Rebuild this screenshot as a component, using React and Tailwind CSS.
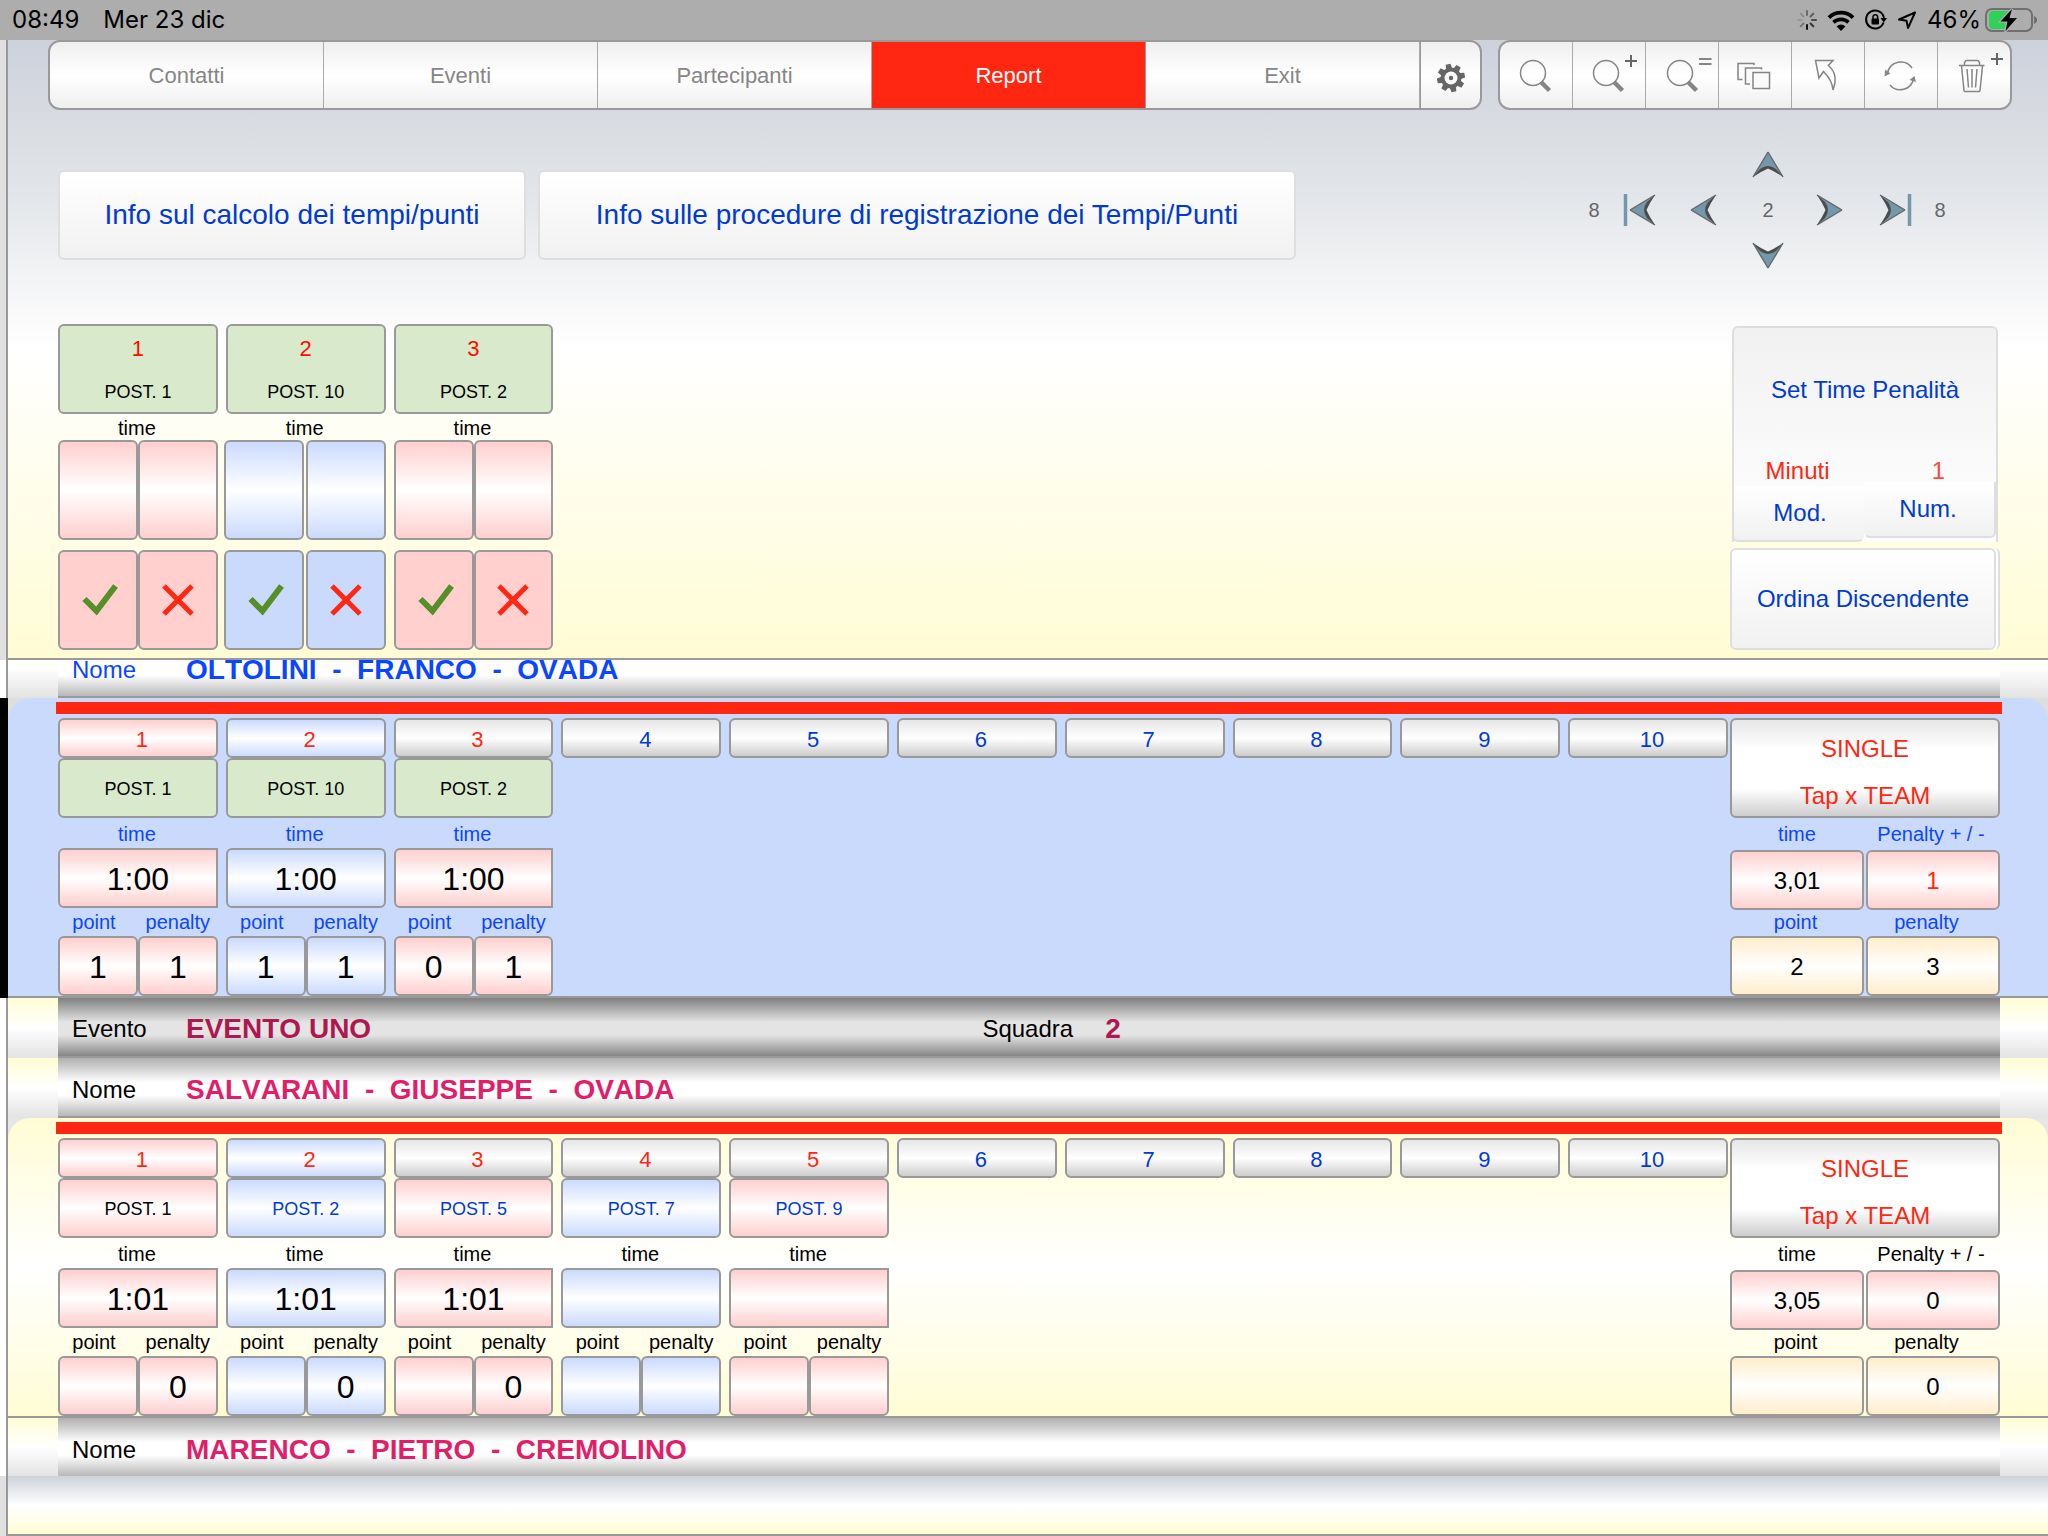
import React from "react";

const TONES = {
  pink: "bg-linear-to-b from-[#ffcfcf] via-white to-[#ffcfcf]",
  blue: "bg-linear-to-b from-[#cbdafd] via-white to-[#cbdafd]",
  gray: "bg-linear-to-b from-[#e6e6e6] via-white to-[#cdcdcd]",
  tan: "bg-linear-to-b from-[#ffedcb] via-white to-[#ffedcb]",
  green: "bg-[#d9e9cb]",
  flatPink: "bg-[#ffd0ce]",
  flatBlue: "bg-[#cadafd]",
};

const BOX = "border-2 border-[#999] min-w-0";

/* ---------- status bar ---------- */

function Spinner() {
  const shades = ["#6b6b6b", "#5a5a5a", "#4a4a4a", "#333", "#111", "#777", "#999", "#8c8c8c"];
  return (
    <svg width="20" height="20" viewBox="-10 -10 20 20" strokeWidth="2" strokeLinecap="round">
      {shades.map((c, i) => (
        <line key={i} x1="0" y1="-5" x2="0" y2="-9" stroke={c} transform={`rotate(${i * 45})`} />
      ))}
    </svg>
  );
}

function StatusBar() {
  return (
    <div className="flex h-10 items-center justify-between bg-[#adadad] pl-3 pr-2.5 font-[Inter,sans-serif] text-[24px] leading-none text-black">
      <div className="flex gap-6">
        <span>08:49</span>
        <span>Mer 23 dic</span>
      </div>
      <div className="flex items-center gap-2.5">
        <Spinner />
        <svg width="28" height="21" viewBox="0 0 26 20" fill="none" stroke="#000" strokeWidth="3.6">
          <path d="M1.5 7.2a16.5 16.5 0 0 1 23 0" />
          <path d="M5.8 11.8a10.5 10.5 0 0 1 14.4 0" />
          <path d="M13 20l-4.2-4.4a6 6 0 0 1 8.4 0z" fill="#000" stroke="none" />
        </svg>
        <svg width="22" height="22" viewBox="0 0 22 22" fill="none" stroke="#000" strokeWidth="2">
          <path d="M18.6 13.5A9 9 0 1 1 19 9" />
          <path d="M15.5 9h6.5l-3.2 4.5z" fill="#000" stroke="none" />
          <rect x="6.5" y="9.5" width="7.5" height="6" rx="1" fill="#000" stroke="none" />
          <path d="M8 10V8a2.3 2.3 0 0 1 4.6 0v2" strokeWidth="1.5" />
        </svg>
        <svg width="20" height="20" viewBox="0 0 20 20" fill="none" stroke="#000" strokeWidth="2" strokeLinejoin="round">
          <path d="M18 2.5L2 9.5l7.5 1.2L11 18z" />
        </svg>
        <div className="flex items-center gap-1">
          <span>46%</span>
          <svg width="53" height="26" viewBox="0 0 53 26">
            <rect x="1" y="2" width="46" height="22" rx="6" fill="none" stroke="#6f6f6f" strokeWidth="2" />
            <path d="M8 4h16v18H8a4 4 0 0 1-4-4V8a4 4 0 0 1 4-4z" fill="#30d158" />
            <path d="M49.5 9.5a4 4 0 0 1 0 7z" fill="#6f6f6f" stroke="#6f6f6f" />
            <path d="M27 2L15.5 14.500h7L20.5 24 32 11h-7.5z" fill="#000" stroke="#adadad" strokeWidth="2.5" paintOrder="stroke" />
          </svg>
        </div>
      </div>
    </div>
  );
}

/* ---------- top navigation ---------- */

const NAV = ["Contatti", "Eventi", "Partecipanti", "Report", "Exit"];
const GLOSS = "bg-linear-to-b from-[#efefef] via-white to-[#efefef]";

function Gear() {
  return (
    <svg width="30" height="30" viewBox="-15 -15 30 30">
      <g fill="#666">
        {[0, 1, 2, 3, 4, 5, 6, 7].map((i) => (
          <path key={i} d="M-3.2 -9L-2.4 -14H2.4L3.2 -9z" transform={`rotate(${i * 45 - 12})`} />
        ))}
        <circle r="10.5" />
      </g>
      <circle r="6.5" fill="#fafafa" />
      <circle r="2.2" fill="#666" />
    </svg>
  );
}

function Magnifier({ cx = 33 }) {
  return (
    <>
      <circle cx={cx} cy="31" r="12.5" strokeWidth="1.5" />
      <path d={`M${cx + 8} 40L${cx + 16.5} 48.5`} strokeWidth="4.5" />
    </>
  );
}

const TOOLS = [
  { name: "Cerca", art: <Magnifier /> },
  {
    name: "Estendi ricerca",
    art: (
      <>
        <Magnifier />
        <path d="M52 19h12M58 13v12" stroke="#666" strokeWidth="2" />
      </>
    ),
  },
  {
    name: "Restringi ricerca",
    art: (
      <>
        <Magnifier cx={34} />
        <path d="M53 17h12.5M53 22h12.5" strokeWidth="2" />
      </>
    ),
  },
  {
    name: "Duplica",
    art: (
      <g fill="#fbfbfb" strokeWidth="1.5">
        <rect x="19" y="21.5" width="16" height="16" />
        <rect x="25.5" y="25" width="17.5" height="17" stroke="#fbfbfb" strokeWidth="4" />
        <rect x="26.5" y="26" width="16" height="16" />
        <rect x="33" y="29.5" width="18" height="18" stroke="#fbfbfb" strokeWidth="4" />
        <rect x="34" y="30.5" width="16.5" height="16" />
      </g>
    ),
  },
  {
    name: "Annulla",
    art: (
      <path
        d="M23.5 18.5H41L36.3 23.5C43 29 45.5 36 41 48C40.5 41 37 35 31.5 29.5L27 36z"
        strokeWidth="1.5"
      />
    ),
  },
  {
    name: "Aggiorna",
    art: (
      <>
        <path d="M22.5 31A13.5 13.5 0 0 1 47 26" strokeWidth="1.5" />
        <path d="M25 43A13.5 13.5 0 0 0 48.5 37" strokeWidth="1.5" />
        <path d="M20 27.5L25.5 31.5L19.5 34.5zM44.5 38L49.5 34L51 40z" fill="#888" stroke="none" />
      </>
    ),
  },
  {
    name: "Elimina",
    art: (
      <g strokeWidth="1.5">
        <path d="M21 23.5h25.5M26.5 23V20.5L28 18.5H40L41.5 20.5V23" />
        <path d="M23.5 24L26 48.5Q26 49.5 27 49.5H41Q42 49.5 42 48.5L44.5 24" />
        <path d="M29 27L30.5 45.5M34 27V45.5M39 27L37.5 45.5" />
        <path d="M53 17h12M59 11v12" stroke="#666" strokeWidth="2" />
      </g>
    ),
  },
];

function TopNav() {
  return (
    <div className="flex gap-4 pl-10 pr-9">
      <nav className={`flex h-[70px] flex-1 overflow-hidden rounded-xl border-2 border-[#999] ${GLOSS}`}>
        {NAV.map((n) => (
          <button
            key={n}
            className={
              n === "Report"
                ? "flex-1 border-r border-[#999] bg-[#ff2712] text-[22px] text-white"
                : "flex-1 border-r border-[#aaa] text-[22px] text-[#868686]"
            }
          >
            {n}
          </button>
        ))}
        <button aria-label="Impostazioni" className="flex w-[60px] items-center justify-center border-l border-[#999] pt-1.5">
          <Gear />
        </button>
      </nav>
      <div className={`flex h-[70px] w-[514px] overflow-hidden rounded-xl border-2 border-[#999] ${GLOSS}`}>
        {TOOLS.map((t, i) => (
          <button
            key={t.name}
            aria-label={t.name}
            className={i < 6 ? "flex-1 border-r border-[#aaa]" : "flex-1"}
          >
            <svg className="w-full" height="66" viewBox="0 0 72 66" fill="none" stroke="#858585">
              {t.art}
            </svg>
          </button>
        ))}
      </div>
    </div>
  );
}

/* ---------- record navigation ---------- */

function Arrow({ turn, bar }) {
  return (
    <svg width="36" height="36" viewBox="-18 -18 36 36">
      <g transform={`rotate(${turn})`}>
        <g transform={bar ? "translate(0 2)" : undefined}>
          <path d="M0 -12L15 13Q7 6 0 4Q-7 6 -15 13z" fill="#7597ab" />
          <path d="M0 -12L15 13M0 -12L-15 13" stroke="#666" strokeWidth="1.4" />
          <path d="M-15 13L-8 5Q-4 2 0 2T8 5L15 13Q7 7.5 0 4.5Q-7 7.5 -15 13z" fill="#4c4c4c" />
        </g>
        {bar && <path d="M-16 -14.5H16" stroke="#7597ab" strokeWidth="3.5" />}
      </g>
    </svg>
  );
}

function RecordNav() {
  return (
    <div className="mr-[98px] mt-[31px] grid grid-cols-[32px_60px_66px_64px_60px_70px_20px] grid-rows-[46px_46px_46px] place-items-center text-[20px] text-[#666]">
      <button aria-label="Su" className="col-start-4"><Arrow turn={0} /></button>
      <span className="col-start-1 row-start-2">8</span>
      <button aria-label="Primo" className="row-start-2"><Arrow turn={-90} bar /></button>
      <button aria-label="Precedente" className="row-start-2"><Arrow turn={-90} /></button>
      <span className="row-start-2">2</span>
      <button aria-label="Successivo" className="row-start-2"><Arrow turn={90} /></button>
      <button aria-label="Ultimo" className="row-start-2"><Arrow turn={90} bar /></button>
      <span className="row-start-2">8</span>
      <button aria-label="Giù" className="col-start-4 row-start-3"><Arrow turn={180} /></button>
    </div>
  );
}

/* ---------- header panel ---------- */

function InfoButton({ wide, children }) {
  return (
    <button
      className={`${wide ? "w-[758px]" : "w-[468px]"} h-[90px] rounded-md border-2 border-[#dedede] bg-linear-to-b from-white to-[#f1f1f1] text-[28px] text-[#003bd1]`}
    >
      {children}
    </button>
  );
}

function Check() {
  return (
    <svg width="40" height="32" viewBox="-4 0 40 32" fill="none" stroke="#568f27" strokeWidth="6">
      <path d="M2.5 15L14.5 27L33.5 2" />
    </svg>
  );
}

function Cross() {
  return (
    <svg width="32" height="32" viewBox="0 0 32 32" fill="none" stroke="#ff2712" strokeWidth="5">
      <path d="M2 2L30 30M30 2L2 30" />
    </svg>
  );
}

function PostCard({ n, post, tone }) {
  const flat = tone === "pink" ? TONES.flatPink : TONES.flatBlue;
  const pair = tone === "pink" ? "flex" : "-ml-0.5 flex gap-0.5";
  return (
    <div className="text-black">
      <button className={`flex h-[90px] w-full flex-col items-center justify-between rounded-md py-2 ${BOX} ${TONES.green}`}>
        <span className="text-[22px] leading-[30px] text-[#ff0c00]">{n}</span>
        <span className="text-lg leading-6">{post}</span>
      </button>
      <label htmlFor={`set-${n}`} className="block h-[26px] pr-0.5 text-center text-[20px] leading-[28px]">time</label>
      <div className={pair}>
        <input id={`set-${n}`} className={`h-[100px] flex-1 rounded-md text-center ${BOX} ${TONES[tone]}`} />
        <input aria-label={`time ${n}`} className={`h-[100px] flex-1 rounded-md text-center ${BOX} ${TONES[tone]}`} />
      </div>
      <div className={`mt-2.5 ${pair}`}>
        <button aria-label="Conferma" className={`flex h-[100px] flex-1 items-center justify-center rounded-md ${BOX} ${flat}`}><Check /></button>
        <button aria-label="Cancella" className={`flex h-[100px] flex-1 items-center justify-center rounded-md ${BOX} ${flat}`}><Cross /></button>
      </div>
    </div>
  );
}

function PenaltySettings() {
  return (
    <div className="w-[270px] pt-0.5 text-2xl text-[#003bd1]">
      <div className="mx-0.5 rounded-t-md border-2 border-b-0 border-[#dedede] bg-linear-to-b from-[#f1f1f1] to-white">
        <button className="h-[124px] w-full">Set Time Penalità</button>
        <div className="flex h-[34px] items-center pt-1 text-[#ff2712]">
          <label htmlFor="minuti" className="w-1/2 pr-1 text-center">Minuti</label>
          <input id="minuti" defaultValue="1" className="w-1/2 min-w-0 bg-transparent pl-4 text-center text-[#ff4a3c]" />
        </div>
        <div className="-mr-0.5 -ml-0.5 flex items-start">
          <button className="h-14 flex-1 rounded-b-md border-2 border-t-0 border-[#dedede] border-r-transparent bg-linear-to-b from-white to-[#f1f1f1] pl-1">Mod.</button>
          <button className="-mt-1 mr-0.5 h-14 flex-1 rounded-b-md border-2 border-t-0 border-[#dedede] border-l-transparent bg-linear-to-b from-white to-[#f1f1f1] pr-1">Num.</button>
        </div>
      </div>
      <div className="mt-1.5 rounded-md border-2 border-l-0 border-y-0 border-[#dedede] bg-white pr-0.5">
        <button className="h-[102px] w-full rounded-md border-2 border-[#dedede] bg-linear-to-b from-white to-[#f1f1f1]">Ordina Discendente</button>
      </div>
    </div>
  );
}

function Header() {
  return (
    <header className="flex bg-[#e0e0e0]">
      <div className="w-1.5" />
      <div className="flex-1 border-b-2 border-l-2 border-[#999] bg-[linear-gradient(#cdd1dc,#dadde2_15%,#e2e5e9_25%,#f0f1f3_36%,white_50%,#fffcd4)]">
        <TopNav />
        <div className="flex justify-between pl-[50px]">
          <div className="flex gap-3 pt-[60px]">
            <InfoButton>Info sul calcolo dei tempi/punti</InfoButton>
            <InfoButton wide>Info sulle procedure di registrazione dei Tempi/Punti</InfoButton>
          </div>
          <RecordNav />
        </div>
        <div className="mt-[45px] flex gap-0.5 pb-2 pl-[50px] pr-12">
          <div className="grid flex-1 grid-cols-10 items-start gap-2">
            <PostCard n="1" post="POST. 1" tone="pink" />
            <PostCard n="2" post="POST. 10" tone="blue" />
            <PostCard n="3" post="POST. 2" tone="pink" />
          </div>
          <PenaltySettings />
        </div>
      </div>
    </header>
  );
}

/* ---------- title bars ---------- */

function Bar({ dark, last, children }) {
  const fill = dark
    ? "bg-[linear-gradient(#808080,#e4e4e4_42%,#e4e4e4_64%,#868686)]"
    : "bg-[linear-gradient(#b0b0b0,white_42%,white_64%,#b8b8b8)]";
  return (
    <div className="flex bg-white">
      <div className="w-1.5" />
      <div className="flex-1 border-l-2 border-[#999] bg-linear-to-b from-[#fffdd4] via-white to-[#e3e3e3] pl-[50px] pr-12">
        <div
          className={`flex items-center ${fill} ${dark ? "pt-1" : "pt-1.5"} ${last ? "h-[58px]" : "h-[60px] border-b-2 border-[#999]"}`}
        >
          {children}
        </div>
      </div>
    </div>
  );
}

function Title({ label, value, labelColor = "text-black", color = "text-[#e01e69]" }) {
  return (
    <div className="flex items-center pl-3.5">
      <span className={`w-[114px] text-2xl leading-8 ${labelColor}`}>{label}</span>
      <span className={`whitespace-pre text-[28px] font-bold leading-9 [font-kerning:none] ${color}`}>{value}</span>
    </div>
  );
}

/* ---------- result blocks ---------- */

function Station({ block, n, data, index }) {
  const id = `${block}-${n}`;
  const headTone = n === 1 ? TONES.pink : n === 2 ? TONES.blue : TONES.gray;
  const head = "h-10 w-full rounded-md pl-2 pt-1 text-[22px] leading-8";
  if (!data) {
    return (
      <button className={`${head} text-[#003bd1] ${BOX} ${TONES.gray}`}>{n}</button>
    );
  }
  const tone = index % 2 === 0 ? "pink" : "blue";
  const round = tone === "pink" ? "rounded-l-md" : "rounded-md";
  return (
    <div>
      <button className={`${head} text-[#ff2712] ${BOX} ${headTone}`}>{n}</button>
      <button className={`block h-[60px] w-full rounded-md pt-0.5 text-lg ${BOX} ${TONES[data.tone || tone]} ${data.link ? "text-[#003bd1]" : "text-black"}`}>
        {data.post}
      </button>
      <label htmlFor={`${id}-time`} className="block h-[30px] pr-0.5 text-center text-[20px] leading-[32px]">time</label>
      <input id={`${id}-time`} defaultValue={data.time} className={`block h-[60px] w-full pt-0.5 text-center text-[32px] text-black ${round} ${BOX} ${TONES[tone]}`} />
      <div className="flex h-7 text-center text-[20px] leading-[28px]">
        <label htmlFor={`${id}-point`} className="w-[45%]">point</label>
        <label htmlFor={`${id}-penalty`} className="flex-1 pl-2">penalty</label>
      </div>
      <div className="flex text-[32px] text-black">
        <input id={`${id}-point`} defaultValue={data.point} className={`h-[60px] flex-1 rounded-md pt-0.5 text-center ${BOX} ${TONES[tone]}`} />
        <input id={`${id}-penalty`} defaultValue={data.penalty} className={`h-[60px] flex-1 rounded-md pt-0.5 text-center ${BOX} ${TONES[tone]}`} />
      </div>
    </div>
  );
}

function Totals({ block, time, adjust, point, penalty, adjustColor = "text-black" }) {
  const id = `${block}-total`;
  const cell = `h-[60px] min-w-0 flex-1 rounded-md pt-0.5 text-center text-2xl ${BOX}`;
  const label = "text-center text-[20px]";
  return (
    <div className="w-[270px]">
      <button className={`flex h-[100px] w-full flex-col items-center justify-center gap-[11px] rounded-md pt-2 text-2xl leading-9 text-[#ff2712] ${BOX} bg-[linear-gradient(#e6e6e6,white_30%,white_72%,#cdcdcd)]`}>
        <span>SINGLE</span>
        <span>Tap x TEAM</span>
      </button>
      <div className="flex h-8 pr-0.5 leading-8">
        <label htmlFor={`${id}-time`} className={`w-1/2 ${label}`}>time</label>
        <label htmlFor={`${id}-adjust`} className={`w-1/2 ${label}`}>Penalty + / -</label>
      </div>
      <div className="flex gap-0.5">
        <input id={`${id}-time`} defaultValue={time} className={`${cell} text-black ${TONES.pink}`} />
        <input id={`${id}-adjust`} defaultValue={adjust} className={`${cell} ${adjustColor} ${TONES.pink}`} />
      </div>
      <div className="flex h-[26px] pr-2 leading-6">
        <label htmlFor={`${id}-point`} className={`w-1/2 ${label}`}>point</label>
        <label htmlFor={`${id}-penalty`} className={`w-1/2 ${label}`}>penalty</label>
      </div>
      <div className="flex gap-0.5">
        <input id={`${id}-point`} defaultValue={point} className={`${cell} text-black ${TONES.tan}`} />
        <input id={`${id}-penalty`} defaultValue={penalty} className={`${cell} text-black ${TONES.tan}`} />
      </div>
    </div>
  );
}

function Block({ id, selected, stations, totals }) {
  return (
    <section className={selected ? "flex bg-black" : "flex bg-white"}>
      <div className={selected ? "w-2" : "w-1.5"} />
      <div className={selected ? "flex-1 border-b-2 border-[#999] bg-[#dedede]" : "flex-1 border-b-2 border-l-2 border-[#999] bg-[#e6e6e6]"}>
        <div
          className={`rounded-t-[22px] pl-12 pr-[46px] pt-1 ${
            selected ? "bg-[#cadafd] text-[#0b46ff]" : "bg-linear-to-b from-[#fffcd4] via-white to-[#fffcd4] text-black"
          }`}
        >
          <div className="h-3 bg-[#ff2712]" />
          <div className="mx-0.5 mt-1 flex gap-0.5">
            <div className="grid flex-1 grid-cols-10 items-start gap-2">
              {[1, 2, 3, 4, 5, 6, 7, 8, 9, 10].map((n, i) => (
                <Station key={n} block={id} n={n} index={i} data={stations[i]} />
              ))}
            </div>
            <Totals block={id} {...totals} />
          </div>
        </div>
      </div>
    </section>
  );
}

const FIRST = [
  { post: "POST. 1", tone: "green", time: "1:00", point: "1", penalty: "1" },
  { post: "POST. 10", tone: "green", time: "1:00", point: "1", penalty: "1" },
  { post: "POST. 2", tone: "green", time: "1:00", point: "0", penalty: "1" },
];

const SECOND = [
  { post: "POST. 1", time: "1:01", point: "", penalty: "0" },
  { post: "POST. 2", link: true, time: "1:01", point: "", penalty: "0" },
  { post: "POST. 5", link: true, time: "1:01", point: "", penalty: "0" },
  { post: "POST. 7", link: true, time: "", point: "", penalty: "" },
  { post: "POST. 9", link: true, time: "", point: "", penalty: "" },
];

export default function App() {
  return (
    <div className="flex min-h-screen flex-col bg-[#e0e0e0] font-['Liberation_Sans',Arial,sans-serif]">
      <StatusBar />
      <Header />
      <main>
        <div className="flex h-[38px] flex-col justify-end overflow-hidden">
          <Bar>
            <Title label="Nome" value="OLTOLINI  -  FRANCO  -  OVADA" labelColor="text-[#0b46ff]" color="text-[#0b46ff]" />
          </Bar>
        </div>
        <Block
          id="oltolini"
          selected
          stations={FIRST}
          totals={{ time: "3,01", adjust: "1", point: "2", penalty: "3", adjustColor: "text-[#ff2712]" }}
        />
        <Bar dark>
          <div className="w-[47.6%]">
            <Title label="Evento" value="EVENTO UNO" color="text-[#ae174f]" />
          </div>
          <div className="flex items-center gap-8">
            <span className="text-2xl">Squadra</span>
            <span className="text-[28px] font-bold leading-9 text-[#ae174f]">2</span>
          </div>
        </Bar>
        <Bar>
          <Title label="Nome" value="SALVARANI  -  GIUSEPPE  -  OVADA" />
        </Bar>
        <Block
          id="salvarani"
          stations={SECOND}
          totals={{ time: "3,05", adjust: "0", point: "", penalty: "0" }}
        />
        <Bar last>
          <Title label="Nome" value="MARENCO  -  PIETRO  -  CREMOLINO" />
        </Bar>
      </main>
      <footer className="flex flex-1">
        <div className="w-1.5" />
        <div className="flex-1 border-b-2 border-l-2 border-[#999] bg-[linear-gradient(#cdd2d9,white_50%,#fffcd4)]" />
      </footer>
    </div>
  );
}
